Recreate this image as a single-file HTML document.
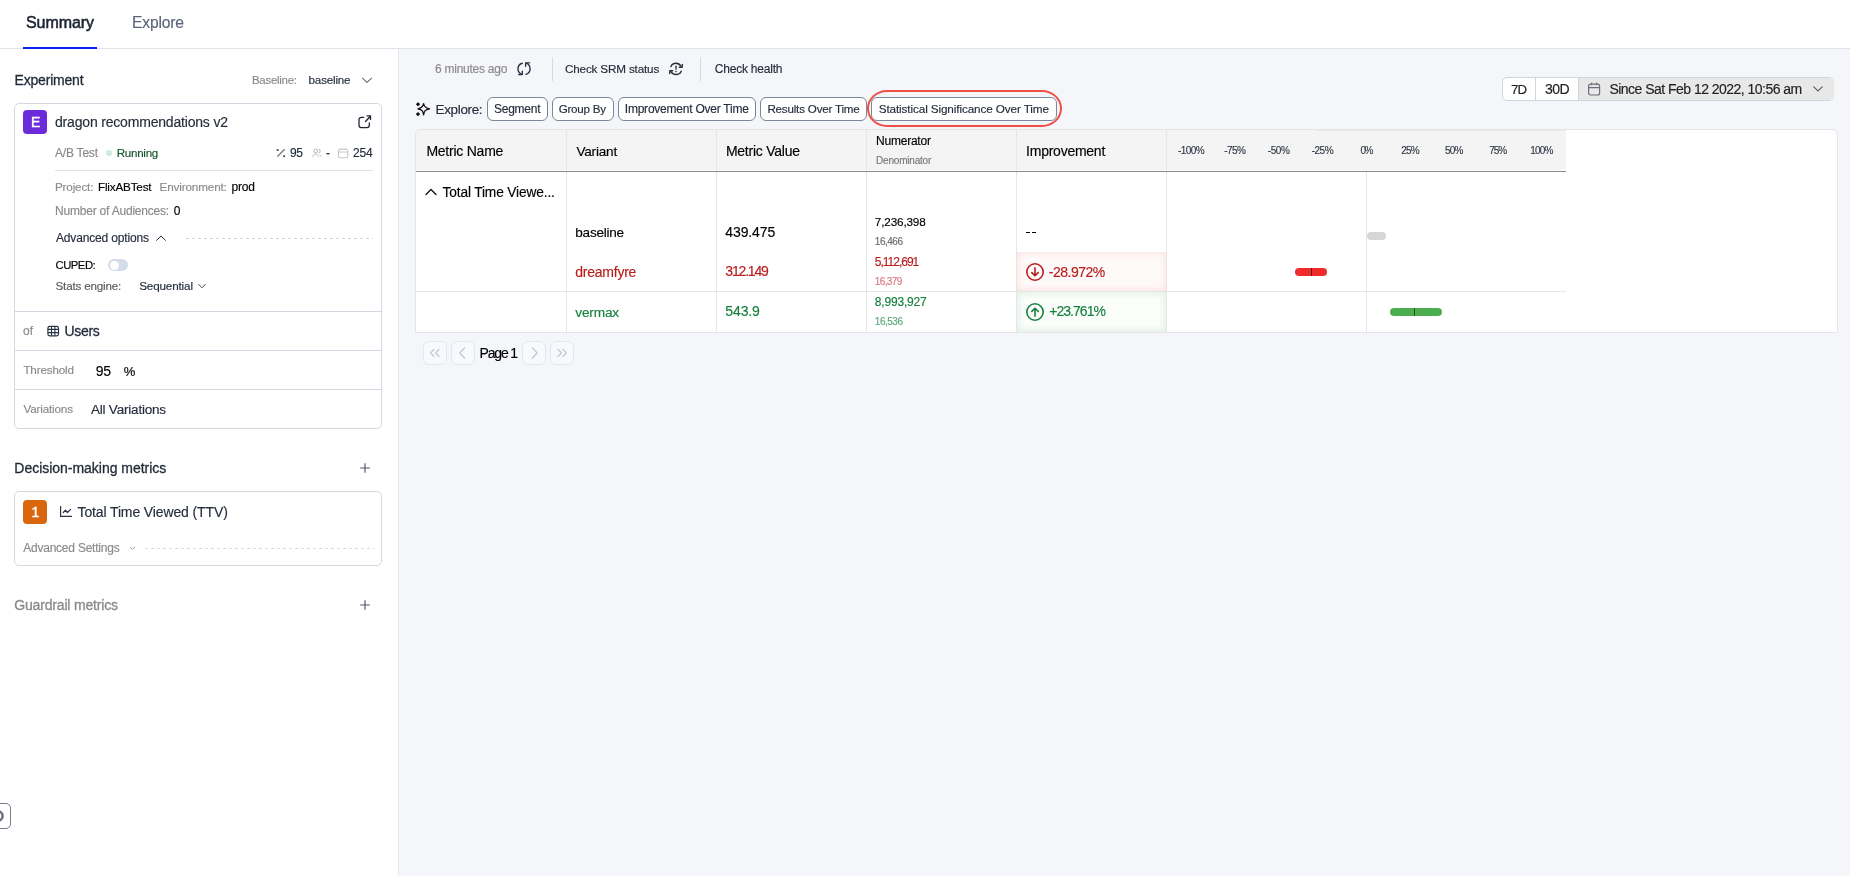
<!DOCTYPE html>
<html><head><meta charset="utf-8"><title>Experiment Summary</title>
<style>
html,body{margin:0;padding:0;width:1850px;height:876px;overflow:hidden;background:#fff;font-family:"Liberation Sans", sans-serif;}
.t{position:absolute;white-space:nowrap;}
svg{overflow:visible}
</style></head><body><div style="position:absolute;left:0;top:0;width:1850px;height:876px;will-change:transform">
<div style="position:absolute;left:399px;top:49px;width:1451px;height:827px;background:#f5f6fa"></div><div style="position:absolute;left:0px;top:48px;width:1850px;height:1px;background:#dfe3ea"></div><div style="position:absolute;left:398px;top:49px;width:1px;height:827px;background:#e6e9f0"></div><div style="position:absolute;left:23px;top:47px;width:74px;height:2px;background:#0b24f2"></div><svg style="position:absolute;left:361px;top:77px" width="12" height="7" viewBox="0 0 12 7" fill="none"><path d="M1.5 1.2 L6 5.4 L10.5 1.2" stroke="#1f2937" stroke-width="1.0" stroke-linecap="round" stroke-linejoin="round"/></svg><div style="position:absolute;left:14px;top:103px;width:366px;height:324px;border:1px solid #d3dae3;border-radius:5px;background:#fff"></div><div style="position:absolute;left:23px;top:110px;width:24px;height:24px;background:#6c2bd9;border-radius:4px"></div><svg style="position:absolute;left:356px;top:113px" width="16" height="16" viewBox="0 0 16 16" fill="none"><path d="M7.7 4.3 H5.3 A2.3 2.3 0 0 0 3 6.6 V12.3 A2.3 2.3 0 0 0 5.3 14.6 H11 A2.3 2.3 0 0 0 13.3 12.3 V10" stroke="#1f2535" stroke-width="1.3" stroke-linecap="round"/><path d="M9.5 8.5 L14.2 3.5 M11 2.8 H14.5 V6.4" stroke="#1f2535" stroke-width="1.3" stroke-linecap="round" stroke-linejoin="round"/></svg><div style="position:absolute;left:106px;top:150px;width:6px;height:6px;background:#cdeedb;border-radius:50%"></div><svg style="position:absolute;left:275px;top:147px" width="12" height="12" viewBox="0 0 12 12" fill="none"><path d="M2.4 9.6 L9.6 2.2" stroke="#707070" stroke-width="1.25"/><rect x="1.7" y="2.1" width="1.9" height="1.9" fill="#555"/><rect x="8.2" y="8.2" width="1.9" height="1.9" fill="#555"/></svg><svg style="position:absolute;left:311px;top:147px" width="12" height="12" viewBox="0 0 12 12" fill="none"><circle cx="4.7" cy="4.1" r="1.9" stroke="#b0b0b0" stroke-width="0.9"/><path d="M1.6 9.8 C2.2 7.9 3.3 7.1 4.7 7.1 C6.1 7.1 7.2 7.9 7.8 9.8" stroke="#b0b0b0" stroke-width="0.9"/><path d="M7.2 2.3 A1.8 1.8 0 0 1 7.6 5.9 M8.8 7.4 C9.5 8 9.9 8.8 10.1 9.8" stroke="#b0b0b0" stroke-width="0.9"/></svg><svg style="position:absolute;left:337px;top:147px" width="12" height="12" viewBox="0 0 12 12" fill="none"><rect x="1.5" y="2.3" width="9.3" height="8.5" rx="1.5" stroke="#c6c6c6" stroke-width="1.1"/><path d="M1.5 5 H10.8 M4 1.2 V3 M8.3 1.2 V3" stroke="#c6c6c6" stroke-width="1.1"/></svg><div style="position:absolute;left:55px;top:170px;width:318px;height:1px;background:#dde3ea"></div><svg style="position:absolute;left:154px;top:233px" width="14" height="10" viewBox="0 0 14 10" fill="none"><path d="M2.6 7.3 L7 3.1 L11.4 7.3" stroke="#2a3345" stroke-width="1.0" stroke-linecap="round" stroke-linejoin="round"/></svg><div style="position:absolute;left:186px;top:238px;width:187px;height:1px;background:repeating-linear-gradient(90deg,#d3d7de 0 3px,transparent 3px 6px)"></div><div style="position:absolute;left:108px;top:259px;width:20px;height:12px;background:#d4dbe9;border-radius:6px"></div><div style="position:absolute;left:109.5px;top:260.5px;width:9px;height:9px;background:#fff;border-radius:50%"></div><svg style="position:absolute;left:196px;top:281px" width="12" height="10" viewBox="0 0 12 10" fill="none"><path d="M2.6 3.4 L6 6.8 L9.4 3.4" stroke="#3a4252" stroke-width="0.95" stroke-linecap="round" stroke-linejoin="round"/></svg><div style="position:absolute;left:15px;top:311px;width:366px;height:1px;background:#d3dae3"></div><svg style="position:absolute;left:46px;top:325px" width="14" height="12" viewBox="0 0 14 12" fill="none"><rect x="1.9" y="1.4" width="10.6" height="9.4" rx="1.8" stroke="#2a3345" stroke-width="1.2"/><path d="M1.9 4.4 H12.5 M1.9 7.6 H12.5 M5.5 1.4 V10.8 M8.9 1.4 V10.8" stroke="#2a3345" stroke-width="1.1"/></svg><div style="position:absolute;left:15px;top:350px;width:366px;height:1px;background:#d3dae3"></div><div style="position:absolute;left:15px;top:389px;width:366px;height:1px;background:#d3dae3"></div><svg style="position:absolute;left:358px;top:461px" width="14" height="14" viewBox="0 0 14 14" fill="none"><path d="M7 2.2 V11.8 M2.2 7 H11.8" stroke="#4f5560" stroke-width="1.15"/></svg><div style="position:absolute;left:14px;top:491px;width:366px;height:73px;border:1px solid #d3dae3;border-radius:5px;background:#fff"></div><div style="position:absolute;left:23px;top:500px;width:24px;height:24px;background:#d9660c;border-radius:4px"></div><svg style="position:absolute;left:58px;top:504px" width="16" height="16" viewBox="0 0 16 16" fill="none"><path d="M2.6 2.6 V12.4 H13.5" stroke="#2a3345" stroke-width="1.2" stroke-linecap="round"/><path d="M5.3 8.5 L7.4 6.2 L9.4 8.5 L12.6 5.3" stroke="#2a3345" stroke-width="1.2" stroke-linecap="round" stroke-linejoin="round"/></svg><svg style="position:absolute;left:128px;top:545px" width="9" height="6" viewBox="0 0 9 6" fill="none"><path d="M2 2 L4.5 4.3 L7 2" stroke="#9a9a9a" stroke-width="0.9"/></svg><div style="position:absolute;left:145px;top:548px;width:229px;height:1px;background:repeating-linear-gradient(90deg,#d8dbe0 0 3px,transparent 3px 6px)"></div><svg style="position:absolute;left:358px;top:598px" width="14" height="14" viewBox="0 0 14 14" fill="none"><path d="M7 2.2 V11.8 M2.2 7 H11.8" stroke="#4f5560" stroke-width="1.15"/></svg><div style="position:absolute;left:-10px;top:803px;width:21px;height:26px;border:1px solid #737a8c;border-radius:5px;background:#fff;box-sizing:border-box"></div><svg style="position:absolute;left:-8px;top:809px" width="14" height="14" viewBox="0 0 14 14" fill="none"><circle cx="6" cy="7" r="4.6" stroke="#6e7487" stroke-width="2.6"/></svg><svg style="position:absolute;left:516px;top:61px" width="16" height="16" viewBox="0 0 16 16" fill="none"><path d="M6.3 2.2 C3.8 2.8 2 5 2 7.8 C2 10.3 3.6 12.5 5.9 13.4" stroke="#2a3345" stroke-width="1.4" stroke-linecap="round"/><path d="M2.6 13.6 H6.3 V10.2" stroke="#2a3345" stroke-width="1.4" stroke-linecap="round" stroke-linejoin="round"/><path d="M10 13.3 C12.4 12.6 14.1 10.5 14.1 7.8 C14.1 5.3 12.5 3.1 10.2 2.2" stroke="#2a3345" stroke-width="1.4" stroke-linecap="round"/><path d="M13.5 1.9 H9.6 V5.3" stroke="#2a3345" stroke-width="1.4" stroke-linecap="round" stroke-linejoin="round"/></svg><div style="position:absolute;left:552px;top:57px;width:1px;height:24px;background:#d5dae3"></div><svg style="position:absolute;left:668px;top:61px" width="16" height="16" viewBox="0 0 16 16" fill="none"><path d="M2.9 5.6 C3.8 3.5 5.7 2.3 8 2.3 C10.2 2.3 11.9 3.5 12.9 5.2" stroke="#252d3c" stroke-width="1.4" stroke-linecap="round"/><path d="M14.4 3.4 L14.2 6.3 L11.3 6.2" stroke="#252d3c" stroke-width="1.4" stroke-linecap="round" stroke-linejoin="round"/><path d="M13.2 10.2 C12.3 12.3 10.4 13.5 8 13.5 C5.8 13.5 4.1 12.4 3.1 10.8" stroke="#252d3c" stroke-width="1.4" stroke-linecap="round"/><path d="M1.7 12.5 L1.8 9.6 L4.7 9.7" stroke="#252d3c" stroke-width="1.4" stroke-linecap="round" stroke-linejoin="round"/><path d="M8 5.2 V8.2" stroke="#252d3c" stroke-width="1.3" stroke-linecap="round"/><circle cx="8" cy="10.4" r="0.75" fill="#252d3c"/></svg><div style="position:absolute;left:700px;top:57px;width:1px;height:24px;background:#d5dae3"></div><svg style="position:absolute;left:414px;top:100px" width="18" height="18" viewBox="0 0 18 18" fill="none"><path d="M9.6 3.6 C10.2 6.6 11.2 8 15.6 8.8 C11.2 9.6 10.2 11 9.6 14.8 C9 11 8 9.6 3.9 8.8 C8 8 9 6.6 9.6 3.6 Z" stroke="#111" stroke-width="1.3" stroke-linejoin="round"/><path d="M4 2 L5.1 3.2 L6.2 4.2 L5 5.3 L4 6.4 L2.9 5.3 L1.8 4.2 L3 3.2 Z" fill="#111"/><path d="M4 11.9 L5.1 13.1 L6.2 14.1 L5 15.2 L4 16.3 L2.9 15.2 L1.8 14.1 L3 13.1 Z" fill="#111"/></svg><div style="position:absolute;left:487px;top:97px;width:61px;height:24px;border:1px solid #7c879b;border-radius:6px;background:#fff;box-sizing:border-box"></div><div style="position:absolute;left:552px;top:97px;width:61.5px;height:24px;border:1px solid #7c879b;border-radius:6px;background:#fff;box-sizing:border-box"></div><div style="position:absolute;left:618px;top:97px;width:137.5px;height:24px;border:1px solid #7c879b;border-radius:6px;background:#fff;box-sizing:border-box"></div><div style="position:absolute;left:760px;top:97px;width:106.5px;height:24px;border:1px solid #7c879b;border-radius:6px;background:#fff;box-sizing:border-box"></div><div style="position:absolute;left:871px;top:97px;width:185.5px;height:24px;border:1px solid #7c879b;border-radius:6px;background:#fff;box-sizing:border-box"></div><div style="position:absolute;left:866.6px;top:89.8px;width:195.4px;height:36.8px;border:2.6px solid #ef5046;border-radius:20px/18.4px;box-sizing:border-box"></div><div style="position:absolute;left:1502px;top:77px;width:332px;height:24px;border:1px solid #cdd5dd;border-radius:5px;background:#fff;box-sizing:border-box;overflow:hidden"></div><div style="position:absolute;left:1535px;top:78px;width:1px;height:22px;background:#cdd5dd"></div><div style="position:absolute;left:1578px;top:78px;width:255px;height:22px;background:#e8e8e8;border-left:1px solid #cdd5dd;border-radius:0 4px 4px 0"></div><svg style="position:absolute;left:1586px;top:81px" width="16" height="16" viewBox="0 0 16 16" fill="none"><rect x="2.6" y="3.2" width="11" height="10.8" rx="2" stroke="#6b6f7a" stroke-width="1.2"/><path d="M2.6 6.6 H13.6 M5.6 1.8 V4.2 M10.6 1.8 V4.2" stroke="#6b6f7a" stroke-width="1.2"/></svg><svg style="position:absolute;left:1812px;top:84px" width="12" height="10" viewBox="0 0 12 10" fill="none"><path d="M1.8 2.8 L6 6.8 L10.2 2.8" stroke="#555" stroke-width="1.1" stroke-linecap="round" stroke-linejoin="round"/></svg><div style="position:absolute;left:415px;top:129px;width:1423px;height:204px;border:1px solid #e4e5e9;border-radius:5px 6px 0 0;background:#fff;box-sizing:border-box"></div><div style="position:absolute;left:416px;top:130px;width:1150px;height:40px;background:#f4f4f4;border-radius:4px 0 0 0"></div><div style="position:absolute;left:566px;top:130px;width:1px;height:202px;background:#e6e6e6"></div><div style="position:absolute;left:716px;top:130px;width:1px;height:202px;background:#e6e6e6"></div><div style="position:absolute;left:866px;top:130px;width:1px;height:202px;background:#e6e6e6"></div><div style="position:absolute;left:1016px;top:130px;width:1px;height:202px;background:#e6e6e6"></div><div style="position:absolute;left:1166px;top:130px;width:1px;height:202px;background:#e6e6e6"></div><div style="position:absolute;left:416px;top:170px;width:1150px;height:1px;background:#fbfbfb"></div><div style="position:absolute;left:416px;top:171px;width:1150px;height:1px;background:#8a8a8a"></div><div style="position:absolute;left:1366px;top:172px;width:1px;height:160px;background:#dfe5fb"></div><div style="position:absolute;left:1316px;top:130px;width:250px;height:1px;background:#e9e9e9"></div><div style="position:absolute;left:416px;top:291px;width:1150px;height:1px;background:#e6e6e6"></div><svg style="position:absolute;left:423px;top:185px" width="16" height="12" viewBox="0 0 16 12" fill="none"><path d="M3 9.5 L8 4.5 L13 9.5" stroke="#111" stroke-width="1.3" stroke-linecap="round" stroke-linejoin="round"/></svg><div style="position:absolute;left:1025.6px;top:231.5px;width:4.4px;height:1.3px;background:#000"></div><div style="position:absolute;left:1031.8px;top:231.5px;width:4.4px;height:1.3px;background:#000"></div><div style="position:absolute;left:1017px;top:252px;width:149px;height:39px;background:#fffafa;box-shadow:inset 0 0 6px 2px #fde4e4"></div><svg style="position:absolute;left:1025px;top:262px" width="20" height="20" viewBox="0 0 20 20" fill="none"><circle cx="10" cy="10" r="8.2" stroke="#b91c1c" stroke-width="1.6"/><path d="M10 5.8 V13.6 M6.8 10.6 L10 13.8 L13.2 10.6" stroke="#b91c1c" stroke-width="1.6" stroke-linecap="round" stroke-linejoin="round"/></svg><div style="position:absolute;left:1017px;top:292px;width:149px;height:40px;background:#fbfdfb;box-shadow:inset 0 0 6px 2px #e2f0e5"></div><svg style="position:absolute;left:1025px;top:302px" width="20" height="20" viewBox="0 0 20 20" fill="none"><circle cx="10" cy="10" r="8.2" stroke="#15803d" stroke-width="1.6"/><path d="M10 14.2 V6.4 M6.8 9.4 L10 6.2 L13.2 9.4" stroke="#15803d" stroke-width="1.6" stroke-linecap="round" stroke-linejoin="round"/></svg><div style="position:absolute;left:1367px;top:232px;width:19px;height:8px;background:#d6d6d6;border-radius:4px"></div><div style="position:absolute;left:1295px;top:268px;width:32px;height:8px;background:#ef2a2a;border-radius:4px"></div><div style="position:absolute;left:1311px;top:268px;width:1px;height:8px;background:#5a1010"></div><div style="position:absolute;left:1390px;top:308px;width:52px;height:8px;background:#4cae50;border-radius:4px"></div><div style="position:absolute;left:1414px;top:308px;width:1px;height:8px;background:#1a5a1e"></div><div style="position:absolute;left:423px;top:341px;width:24px;height:24px;border:1px solid #e3e7f0;border-radius:6px;box-sizing:border-box;background:#f8f9fc"></div><div style="position:absolute;left:451px;top:341px;width:24px;height:24px;border:1px solid #e3e7f0;border-radius:6px;box-sizing:border-box;background:#f8f9fc"></div><div style="position:absolute;left:522px;top:341px;width:24px;height:24px;border:1px solid #e3e7f0;border-radius:6px;box-sizing:border-box;background:#f8f9fc"></div><div style="position:absolute;left:550px;top:341px;width:24px;height:24px;border:1px solid #e3e7f0;border-radius:6px;box-sizing:border-box;background:#f8f9fc"></div><svg style="position:absolute;left:423px;top:341px" width="24" height="24" viewBox="0 0 24 24" fill="none"><path d="M11 8.3 L7.6 11.8 L11 15.4 M16 8.3 L12.6 11.8 L16 15.4" stroke="#bcc3d1" stroke-width="1.2" stroke-linecap="round" stroke-linejoin="round"/></svg><svg style="position:absolute;left:451px;top:341px" width="24" height="24" viewBox="0 0 24 24" fill="none"><path d="M13.6 6.8 L8.8 11.9 L13.6 17" stroke="#bcc3d1" stroke-width="1.2" stroke-linecap="round" stroke-linejoin="round"/></svg><svg style="position:absolute;left:522px;top:341px" width="24" height="24" viewBox="0 0 24 24" fill="none"><path d="M10.4 6.8 L15.2 11.9 L10.4 17" stroke="#bcc3d1" stroke-width="1.2" stroke-linecap="round" stroke-linejoin="round"/></svg><svg style="position:absolute;left:550px;top:341px" width="24" height="24" viewBox="0 0 24 24" fill="none"><path d="M8 8.3 L11.4 11.8 L8 15.4 M13 8.3 L16.4 11.8 L13 15.4" stroke="#bcc3d1" stroke-width="1.2" stroke-linecap="round" stroke-linejoin="round"/></svg>
<div class="t" style="left:26.00px;top:15.00px;font-size:16px;line-height:16px;color:#1f2433;letter-spacing:-0.076px;-webkit-text-stroke:0.55px #1f2433;">Summary</div><div class="t" style="left:132.00px;top:15.00px;font-size:15.66px;line-height:15.66px;color:#5b6478;letter-spacing:-0.186px;-webkit-text-stroke:0.15px #5b6478;">Explore</div><div class="t" style="left:14.60px;top:73.00px;font-size:14px;line-height:14px;color:#1f2937;letter-spacing:-0.201px;-webkit-text-stroke:0.3px #1f2937;">Experiment</div><div class="t" style="left:252.00px;top:75.00px;font-size:11.46px;line-height:11.46px;color:#8a8a8a;letter-spacing:-0.267px;-webkit-text-stroke:0.15px #8a8a8a;">Baseline:</div><div class="t" style="left:308.60px;top:74.00px;font-size:11.63px;line-height:11.63px;color:#1f2937;letter-spacing:-0.190px;-webkit-text-stroke:0.15px #1f2937;">baseline</div><div class="t" style="left:31.00px;top:115.00px;font-size:14px;line-height:14px;color:#fff;-webkit-text-stroke:0.45px #fff;">E</div><div class="t" style="left:55.00px;top:115.00px;font-size:14px;line-height:14px;color:#252d3c;letter-spacing:-0.185px;-webkit-text-stroke:0.15px #252d3c;">dragon recommendations v2</div><div class="t" style="left:55.00px;top:147.00px;font-size:12px;line-height:12px;color:#8a8a8a;letter-spacing:-0.210px;-webkit-text-stroke:0.15px #8a8a8a;">A/B Test</div><div class="t" style="left:116.70px;top:148.00px;font-size:11.58px;line-height:11.58px;color:#14532b;letter-spacing:-0.254px;-webkit-text-stroke:0.15px #14532b;">Running</div><div class="t" style="left:290.00px;top:147.00px;font-size:12px;line-height:12px;color:#1f2937;letter-spacing:-0.359px;-webkit-text-stroke:0.15px #1f2937;">95</div><div class="t" style="left:326.00px;top:147.00px;font-size:12px;line-height:12px;color:#1f2937;-webkit-text-stroke:0.15px #1f2937;">-</div><div class="t" style="left:353.00px;top:147.00px;font-size:12px;line-height:12px;color:#1f2937;letter-spacing:-0.166px;-webkit-text-stroke:0.15px #1f2937;">254</div><div class="t" style="left:55.00px;top:181.00px;font-size:11.66px;line-height:11.66px;color:#8a8a8a;letter-spacing:-0.161px;-webkit-text-stroke:0.15px #8a8a8a;">Project:</div><div class="t" style="left:98.00px;top:181.00px;font-size:11.67px;line-height:11.67px;color:#000000;letter-spacing:-0.169px;-webkit-text-stroke:0.15px #000000;">FlixABTest</div><div class="t" style="left:159.60px;top:181.00px;font-size:11.71px;line-height:11.71px;color:#8a8a8a;letter-spacing:-0.153px;-webkit-text-stroke:0.15px #8a8a8a;">Environment:</div><div class="t" style="left:231.60px;top:181.00px;font-size:12px;line-height:12px;color:#000000;letter-spacing:-0.244px;-webkit-text-stroke:0.15px #000000;">prod</div><div class="t" style="left:55.00px;top:205.00px;font-size:12px;line-height:12px;color:#8a8a8a;letter-spacing:-0.204px;-webkit-text-stroke:0.15px #8a8a8a;">Number of Audiences:</div><div class="t" style="left:173.80px;top:205.00px;font-size:12px;line-height:12px;color:#000000;-webkit-text-stroke:0.15px #000000;">0</div><div class="t" style="left:56.00px;top:232.00px;font-size:12px;line-height:12px;color:#252d3c;letter-spacing:-0.160px;-webkit-text-stroke:0.15px #252d3c;">Advanced options</div><div class="t" style="left:55.50px;top:260.00px;font-size:11.3px;line-height:11.3px;color:#000000;letter-spacing:-0.499px;-webkit-text-stroke:0.15px #000000;">CUPED:</div><div class="t" style="left:55.50px;top:280.00px;font-size:11.63px;line-height:11.63px;color:#5a5a5a;letter-spacing:-0.175px;-webkit-text-stroke:0.15px #5a5a5a;">Stats engine:</div><div class="t" style="left:139.20px;top:280.00px;font-size:11.69px;line-height:11.69px;color:#252d3c;letter-spacing:-0.160px;-webkit-text-stroke:0.15px #252d3c;">Sequential</div><div class="t" style="left:23.00px;top:325.00px;font-size:12px;line-height:12px;color:#8a8a8a;letter-spacing:-0.016px;-webkit-text-stroke:0.15px #8a8a8a;">of</div><div class="t" style="left:64.60px;top:324.00px;font-size:14px;line-height:14px;color:#252d3c;letter-spacing:-0.341px;-webkit-text-stroke:0.3px #252d3c;">Users</div><div class="t" style="left:23.40px;top:364.00px;font-size:11.7px;line-height:11.7px;color:#8a8a8a;letter-spacing:-0.165px;-webkit-text-stroke:0.15px #8a8a8a;">Threshold</div><div class="t" style="left:95.80px;top:364.00px;font-size:14px;line-height:14px;color:#000000;letter-spacing:-0.378px;-webkit-text-stroke:0.15px #000000;">95</div><div class="t" style="left:123.80px;top:365.00px;font-size:13px;line-height:13px;color:#000000;-webkit-text-stroke:0.15px #000000;">%</div><div class="t" style="left:23.40px;top:403.00px;font-size:11.68px;line-height:11.68px;color:#8a8a8a;letter-spacing:-0.153px;-webkit-text-stroke:0.15px #8a8a8a;">Variations</div><div class="t" style="left:90.90px;top:403.00px;font-size:13.53px;line-height:13.53px;color:#252d3c;letter-spacing:-0.203px;-webkit-text-stroke:0.15px #252d3c;">All Variations</div><div class="t" style="left:14.30px;top:461.00px;font-size:14px;line-height:14px;color:#1f2937;letter-spacing:-0.022px;-webkit-text-stroke:0.3px #1f2937;">Decision-making metrics</div><div class="t" style="left:31.50px;top:505.00px;font-size:14px;line-height:14px;color:#fff;-webkit-text-stroke:0.45px #fff;">1</div><div class="t" style="left:77.50px;top:505.00px;font-size:14px;line-height:14px;color:#252d3c;letter-spacing:-0.123px;-webkit-text-stroke:0.15px #252d3c;">Total Time Viewed (TTV)</div><div class="t" style="left:23.20px;top:542.00px;font-size:12px;line-height:12px;color:#8a8a8a;letter-spacing:-0.224px;-webkit-text-stroke:0.15px #8a8a8a;">Advanced Settings</div><div class="t" style="left:14.30px;top:598.00px;font-size:14px;line-height:14px;color:#8a8a8a;letter-spacing:-0.175px;-webkit-text-stroke:0.3px #8a8a8a;">Guardrail metrics</div><div class="t" style="left:435.00px;top:63.00px;font-size:12px;line-height:12px;color:#8a8a8a;letter-spacing:-0.249px;-webkit-text-stroke:0.15px #8a8a8a;">6 minutes ago</div><div class="t" style="left:565.00px;top:63.00px;font-size:11.69px;line-height:11.69px;color:#252d3c;letter-spacing:-0.167px;-webkit-text-stroke:0.15px #252d3c;">Check SRM status</div><div class="t" style="left:714.80px;top:63.00px;font-size:12px;line-height:12px;color:#252d3c;letter-spacing:-0.213px;-webkit-text-stroke:0.15px #252d3c;">Check health</div><div class="t" style="left:435.50px;top:103.00px;font-size:13.41px;line-height:13.41px;color:#252d3c;letter-spacing:-0.298px;-webkit-text-stroke:0.15px #252d3c;">Explore:</div><div class="t" style="left:494.00px;top:103.00px;font-size:12px;line-height:12px;color:#252d3c;letter-spacing:-0.255px;-webkit-text-stroke:0.15px #252d3c;">Segment</div><div class="t" style="left:558.70px;top:103.00px;font-size:11.6px;line-height:11.6px;color:#252d3c;letter-spacing:-0.232px;-webkit-text-stroke:0.15px #252d3c;">Group By</div><div class="t" style="left:624.80px;top:103.00px;font-size:12px;line-height:12px;color:#252d3c;letter-spacing:-0.230px;-webkit-text-stroke:0.15px #252d3c;">Improvement Over Time</div><div class="t" style="left:767.40px;top:103.00px;font-size:11.62px;line-height:11.62px;color:#252d3c;letter-spacing:-0.191px;-webkit-text-stroke:0.15px #252d3c;">Results Over Time</div><div class="t" style="left:878.70px;top:103.00px;font-size:11.74px;line-height:11.74px;color:#252d3c;letter-spacing:-0.117px;-webkit-text-stroke:0.15px #252d3c;">Statistical Significance Over Time</div><div class="t" style="left:1510.90px;top:83.00px;font-size:13.28px;line-height:13.28px;color:#222;letter-spacing:-0.879px;-webkit-text-stroke:0.15px #222;">7D</div><div class="t" style="left:1544.90px;top:82.00px;font-size:14px;line-height:14px;color:#222;letter-spacing:-0.494px;-webkit-text-stroke:0.15px #222;">30D</div><div class="t" style="left:1609.40px;top:82.00px;font-size:14px;line-height:14px;color:#222;letter-spacing:-0.523px;-webkit-text-stroke:0.15px #222;">Since Sat Feb 12 2022, 10:56 am</div><div class="t" style="left:426.40px;top:144.00px;font-size:14px;line-height:14px;color:#000000;letter-spacing:-0.236px;-webkit-text-stroke:0.15px #000000;">Metric Name</div><div class="t" style="left:576.40px;top:145.00px;font-size:13.6px;line-height:13.6px;color:#000000;letter-spacing:-0.199px;-webkit-text-stroke:0.15px #000000;">Variant</div><div class="t" style="left:725.90px;top:144.00px;font-size:14px;line-height:14px;color:#000000;letter-spacing:-0.235px;-webkit-text-stroke:0.15px #000000;">Metric Value</div><div class="t" style="left:876.10px;top:135.00px;font-size:12px;line-height:12px;color:#000000;letter-spacing:-0.236px;-webkit-text-stroke:0.15px #000000;">Numerator</div><div class="t" style="left:876.10px;top:156.00px;font-size:10px;line-height:10px;color:#777;letter-spacing:-0.207px;-webkit-text-stroke:0.15px #777;">Denominator</div><div class="t" style="left:1026.10px;top:144.00px;font-size:14px;line-height:14px;color:#000000;letter-spacing:-0.250px;-webkit-text-stroke:0.15px #000000;">Improvement</div><div class="t" style="left:1191.00px;top:146.00px;font-size:10px;line-height:10px;color:#333a48;letter-spacing:-0.602px;-webkit-text-stroke:0.15px #333a48;transform:translateX(-50%);">-100%</div><div class="t" style="left:1234.80px;top:146.00px;font-size:10px;line-height:10px;color:#333a48;letter-spacing:-0.586px;-webkit-text-stroke:0.15px #333a48;transform:translateX(-50%);">-75%</div><div class="t" style="left:1278.60px;top:146.00px;font-size:10px;line-height:10px;color:#333a48;letter-spacing:-0.386px;-webkit-text-stroke:0.15px #333a48;transform:translateX(-50%);">-50%</div><div class="t" style="left:1322.40px;top:146.00px;font-size:10px;line-height:10px;color:#333a48;letter-spacing:-0.520px;-webkit-text-stroke:0.15px #333a48;transform:translateX(-50%);">-25%</div><div class="t" style="left:1366.20px;top:146.00px;font-size:10px;line-height:10px;color:#333a48;letter-spacing:-1.453px;-webkit-text-stroke:0.15px #333a48;transform:translateX(-50%);">0%</div><div class="t" style="left:1410.00px;top:146.00px;font-size:10px;line-height:10px;color:#333a48;letter-spacing:-0.808px;-webkit-text-stroke:0.15px #333a48;transform:translateX(-50%);">25%</div><div class="t" style="left:1453.80px;top:146.00px;font-size:10px;line-height:10px;color:#333a48;letter-spacing:-0.808px;-webkit-text-stroke:0.15px #333a48;transform:translateX(-50%);">50%</div><div class="t" style="left:1497.60px;top:146.00px;font-size:10px;line-height:10px;color:#333a48;letter-spacing:-1.058px;-webkit-text-stroke:0.15px #333a48;transform:translateX(-50%);">75%</div><div class="t" style="left:1541.40px;top:146.00px;font-size:10px;line-height:10px;color:#333a48;letter-spacing:-0.859px;-webkit-text-stroke:0.15px #333a48;transform:translateX(-50%);">100%</div><div class="t" style="left:442.50px;top:186.00px;font-size:13.71px;line-height:13.71px;color:#000000;letter-spacing:-0.131px;-webkit-text-stroke:0.15px #000000;">Total Time Viewe...</div><div class="t" style="left:575.30px;top:226.00px;font-size:13.54px;line-height:13.54px;color:#000000;letter-spacing:-0.236px;-webkit-text-stroke:0.15px #000000;">baseline</div><div class="t" style="left:725.30px;top:225.00px;font-size:14px;line-height:14px;color:#000000;letter-spacing:-0.118px;-webkit-text-stroke:0.15px #000000;">439.475</div><div class="t" style="left:874.80px;top:216.00px;font-size:11.73px;line-height:11.73px;color:#000000;letter-spacing:-0.148px;-webkit-text-stroke:0.15px #000000;">7,236,398</div><div class="t" style="left:874.80px;top:237.00px;font-size:10px;line-height:10px;color:#6b6b6b;letter-spacing:-0.479px;-webkit-text-stroke:0.15px #6b6b6b;">16,466</div><div class="t" style="left:575.30px;top:265.00px;font-size:14px;line-height:14px;color:#b91c1c;letter-spacing:-0.241px;-webkit-text-stroke:0.15px #b91c1c;">dreamfyre</div><div class="t" style="left:725.30px;top:264.00px;font-size:14px;line-height:14px;color:#b91c1c;letter-spacing:-1.168px;-webkit-text-stroke:0.15px #b91c1c;">312.149</div><div class="t" style="left:874.80px;top:256.00px;font-size:12px;line-height:12px;color:#b91c1c;letter-spacing:-1.000px;-webkit-text-stroke:0.15px #b91c1c;">5,112,691</div><div class="t" style="left:874.80px;top:277.00px;font-size:10px;line-height:10px;color:#d77a80;letter-spacing:-0.619px;-webkit-text-stroke:0.15px #d77a80;">16,379</div><div class="t" style="left:1048.80px;top:265.00px;font-size:14px;line-height:14px;color:#b91c1c;letter-spacing:-0.491px;-webkit-text-stroke:0.15px #b91c1c;">-28.972%</div><div class="t" style="left:575.30px;top:306.00px;font-size:13.69px;line-height:13.69px;color:#15803d;letter-spacing:-0.198px;-webkit-text-stroke:0.15px #15803d;">vermax</div><div class="t" style="left:725.30px;top:304.00px;font-size:14px;line-height:14px;color:#15803d;letter-spacing:-0.112px;-webkit-text-stroke:0.15px #15803d;">543.9</div><div class="t" style="left:874.80px;top:296.00px;font-size:12px;line-height:12px;color:#15803d;letter-spacing:-0.174px;-webkit-text-stroke:0.15px #15803d;">8,993,927</div><div class="t" style="left:874.80px;top:317.00px;font-size:10px;line-height:10px;color:#5ea87c;letter-spacing:-0.479px;-webkit-text-stroke:0.15px #5ea87c;">16,536</div><div class="t" style="left:1049.30px;top:304.00px;font-size:14px;line-height:14px;color:#15803d;letter-spacing:-0.979px;-webkit-text-stroke:0.15px #15803d;">+23.761%</div><div class="t" style="left:479.60px;top:346.00px;font-size:14px;line-height:14px;color:#000000;letter-spacing:-1.195px;-webkit-text-stroke:0.15px #000000;">Page 1</div>
</div></body></html>
